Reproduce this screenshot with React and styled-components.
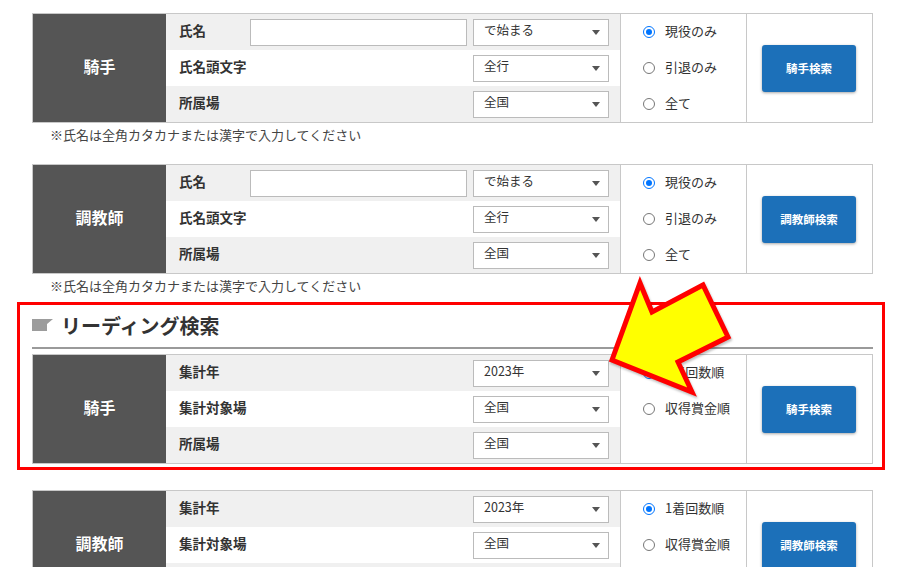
import styled, { createGlobalStyle } from "styled-components";

const GlobalStyle = createGlobalStyle`
  body {
    margin: 0;
    background: #fff;
    font-family: "Noto Sans CJK JP", "Noto Sans", sans-serif;
    color: #333;
  }
`;

const Page = styled.div`
  position: relative;
  width: 907px;
  height: 567px;
  overflow: hidden;
  box-sizing: border-box;
  padding: 13px 34px 0 32px;
`;

const Table = styled.div`
  display: grid;
  grid-template-columns: 133px 454px 126px 126px;
  border: 1px solid #c8c8c8;
  margin-top: ${(p) => p.$top || 0}px;
`;

const Head = styled.div`
  background: #555;
  color: #fff;
  font-size: 16px;
  font-weight: bold;
  line-height: 1;
  display: flex;
  align-items: center;
  justify-content: center;
  padding-bottom: 4px;
  text-shadow: 0 0 1px rgba(0, 0, 0, 0.4);
`;

const Fields = styled.div`
  display: flex;
  flex-direction: column;
`;

const FieldRow = styled.div`
  height: 36px;
  display: flex;
  align-items: center;
  padding: 0 11px 0 13px;
  background: ${(p) => (p.$shade ? "#f0f0f0" : "#fff")};
`;

const Label = styled.span`
  flex: 1;
  font-size: 13.5px;
  font-weight: bold;
  line-height: 1;
  padding-bottom: 3px;
  color: #333;
`;

const TextBox = styled.div`
  width: 217px;
  height: 27px;
  box-sizing: border-box;
  border: 1px solid #bbb;
  background: #fff;
  margin-right: 6px;
`;

const Select = styled.div`
  width: 136px;
  height: 27px;
  box-sizing: border-box;
  border: 1px solid #bbb;
  background: #fff;
  display: flex;
  align-items: center;
  padding: 0 8px 0 10px;
  font-size: 12.5px;
  color: #333;
`;

const SelectText = styled.span`
  flex: 1;
  line-height: 1;
  padding-bottom: 3px;
`;

const Caret = styled.span`
  width: 0;
  height: 0;
  border-left: 4.5px solid transparent;
  border-right: 4.5px solid transparent;
  border-top: 5px solid #555;
`;

const Radios = styled.div`
  display: flex;
  flex-direction: column;
  border-left: 1px solid #c8c8c8;
`;

const RadioRow = styled.div`
  height: 36px;
  display: flex;
  align-items: center;
  padding-left: 22px;
  gap: 10px;
  font-size: 13px;
  color: #333;
`;

const RadioText = styled.span`
  line-height: 1;
  padding-bottom: 3px;
`;

const RadioMark = styled.span`
  width: 12px;
  height: 12px;
  box-sizing: border-box;
  border-radius: 50%;
  border: 1px solid ${(p) => (p.$on ? "#0075ff" : "#777")};
  background: #fff;
  display: flex;
  align-items: center;
  justify-content: center;
  &::after {
    content: "";
    width: 6px;
    height: 6px;
    border-radius: 50%;
    background: ${(p) => (p.$on ? "#0075ff" : "transparent")};
  }
`;

const ButtonCell = styled.div`
  border-left: 1px solid #c8c8c8;
  display: flex;
  align-items: center;
  justify-content: center;
`;

const SearchButton = styled.button`
  width: 94px;
  height: 47px;
  border: none;
  border-radius: 3px;
  background: #1c70b9;
  color: #fff;
  font-family: inherit;
  font-size: 11.5px;
  font-weight: bold;
  box-shadow: 0 1px 3px rgba(0, 0, 0, 0.35);
  margin-right: 1px;
`;

const Note = styled.div`
  height: 24px;
  line-height: 24px;
  padding-left: 18px;
  font-size: 13px;
  color: #444;
  margin-bottom: ${(p) => p.$bottom || 0}px;
`;

const Highlight = styled.div`
  margin: 4px -12px 0 -15px;
  border: 3px solid #ff0000;
  padding: 0 9px 3px 12px;
`;

const Heading = styled.h2`
  margin: 0;
  height: 42px;
  display: flex;
  align-items: center;
  gap: 8px;
  font-size: 20px;
  font-weight: bold;
  color: #333;
  padding-bottom: 2px;
  box-sizing: border-box;
`;

const Rule = styled.div`
  height: 2px;
  background: #9a9a9a;
  margin-bottom: 5px;
`;

const Arrow = styled.svg`
  position: absolute;
  left: 600px;
  top: 270px;
  filter: drop-shadow(1px 2px 1px rgba(0, 0, 0, 0.25));
`;

const Field = ({ label, shade, value, input }) => (
  <FieldRow $shade={shade}>
    <Label>{label}</Label>
    {input && <TextBox />}
    <Select>
      <SelectText>{value}</SelectText>
      <Caret />
    </Select>
  </FieldRow>
);

const SearchBlock = ({ title, fields, radios, button, top }) => (
  <Table $top={top}>
    <Head>{title}</Head>
    <Fields>
      {fields.map((f, i) => (
        <Field key={f.label} shade={i % 2 === 0} {...f} />
      ))}
    </Fields>
    <Radios>
      {radios.map((r, i) => (
        <RadioRow key={r}>
          <RadioMark $on={i === 0} />
          <RadioText>{r}</RadioText>
        </RadioRow>
      ))}
    </Radios>
    <ButtonCell>
      <SearchButton>{button}</SearchButton>
    </ButtonCell>
  </Table>
);

const nameFields = [
  { label: "氏名", value: "で始まる", input: true },
  { label: "氏名頭文字", value: "全行" },
  { label: "所属場", value: "全国" },
];

const leadFields = [
  { label: "集計年", value: "2023年" },
  { label: "集計対象場", value: "全国" },
  { label: "所属場", value: "全国" },
];

const statusRadios = ["現役のみ", "引退のみ", "全て"];
const leadRadios = ["1着回数順", "収得賞金順"];

export default function App() {
  return (
    <Page>
      <GlobalStyle />
      <SearchBlock title="騎手" fields={nameFields} radios={statusRadios} button="騎手検索" />
      <Note $bottom={17}>※氏名は全角カタカナまたは漢字で入力してください</Note>
      <SearchBlock title="調教師" fields={nameFields} radios={statusRadios} button="調教師検索" />
      <Note>※氏名は全角カタカナまたは漢字で入力してください</Note>

      <Highlight>
        <Heading>
          <svg width="21" height="12" viewBox="0 0 21 12">
            <polygon points="0,0 21,0 15,5 15,12 0,12" fill="#9c9c9c" />
          </svg>
          リーディング検索
        </Heading>
        <Rule />
        <SearchBlock title="騎手" fields={leadFields} radios={leadRadios} button="騎手検索" />
      </Highlight>

      <SearchBlock top={20} title="調教師" fields={leadFields} radios={leadRadios} button="調教師検索" />

      <Arrow width="140" height="135" viewBox="0 0 140 135">
        <polygon
          points="40,13 52,42 103,15 128,67 78,92 92,122 12,90"
          fill="#ffff00"
          stroke="#ff0000"
          strokeWidth="5"
          strokeLinejoin="miter"
        />
      </Arrow>
    </Page>
  );
}
